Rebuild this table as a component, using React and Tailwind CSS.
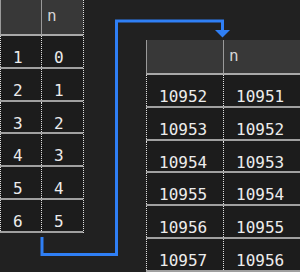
import React from 'react'

const leftRows = [
  ['1', '0'],
  ['2', '1'],
  ['3', '2'],
  ['4', '3'],
  ['5', '4'],
  ['6', '5'],
]

const rightRows = [
  ['10952', '10951'],
  ['10953', '10952'],
  ['10954', '10953'],
  ['10955', '10954'],
  ['10956', '10955'],
  ['10957', '10956'],
]

function DataTable({ rows, widths, headHeight }) {
  return (
    <div className="flex flex-col">
      {/* header */}
      <div className="flex border-b-2 border-[#a8a8a8]">
        {widths.map((w, i) => (
          <div
            key={i}
            className={`${w} ${headHeight} bg-[#383838] border-l border-[#9a9a9a] pl-[5px] pt-[6px] leading-[19px] text-[#d4d4d4]`}
          >
            {i === 1 ? 'n' : ''}
          </div>
        ))}
      </div>
      {/* body */}
      {rows.map((r, ri) => (
        <div key={ri} className="flex border-b-2 border-[#a0a0a0]">
          {r.map((v, ci) => (
            <div
              key={ci}
              className={`${widths[ci]} h-[30.8px] bg-[#1c1c1c] border-l border-dotted border-[#e0e0e0] pl-[12px] pt-[12px] leading-[19px] text-[#ececec]`}
            >
              {v}
            </div>
          ))}
        </div>
      ))}
    </div>
  )
}

export default function App() {
  return (
    <div
      className="relative w-[300px] h-[272px] overflow-hidden bg-[#212121] text-[16px]"
      style={{ fontFamily: '"DejaVu Sans Mono", "Liberation Mono", monospace' }}
    >
      <div className="flex items-start gap-[62px]">
        {/* left table */}
        <div className="border-r border-dotted border-[#e0e0e0]">
          <DataTable rows={leftRows} widths={['w-[41px]', 'w-[42px]']} headHeight="h-[34px]" />
        </div>
        {/* right table */}
        <div className="mt-[40px] shrink-0">
          <DataTable rows={rightRows} widths={['w-[77px]', 'w-[80px]']} headHeight="h-[33px]" />
        </div>
      </div>

      {/* connector arrow */}
      <svg
        className="absolute inset-0 pointer-events-none"
        width="300"
        height="272"
        viewBox="0 0 300 272"
      >
        <path
          d="M42 237 V254.5 H116.5 V21 H222.5 V31"
          fill="none"
          stroke="#2f7ff5"
          strokeWidth="3"
          strokeLinejoin="miter"
        />
        <polygon points="215,30 230,30 222.5,37.5" fill="#2f7ff5" />
      </svg>
    </div>
  )
}
